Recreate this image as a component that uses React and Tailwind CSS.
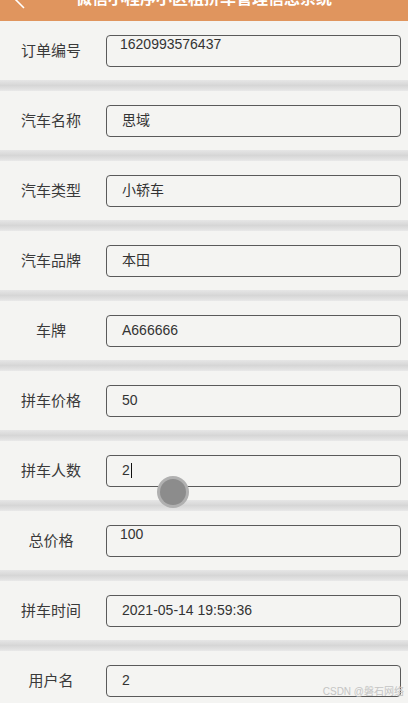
import React from "react";

const rows = [
  { label: "订单编号", value: "1620993576437", top: true },
  { label: "汽车名称", value: "思域" },
  { label: "汽车类型", value: "小轿车" },
  { label: "汽车品牌", value: "本田" },
  { label: "车牌", value: "A666666" },
  { label: "拼车价格", value: "50" },
  { label: "拼车人数", value: "2", caret: true },
  { label: "总价格", value: "100", top: true },
  { label: "拼车时间", value: "2021-05-14 19:59:36" },
  { label: "用户名", value: "2" },
];

const Row = ({ label, value, top, caret }) => (
  <div className="flex flex-row items-center h-[59px] bg-[#f4f4f2]">
    <div className="w-[90px] ml-[6px] mt-[2px] text-center text-[15px] text-[#3a3a3a]">{label}</div>
    <div
      className={
        top
          ? "flex flex-row items-start ml-[10px] w-[295px] h-[32px] border border-[#5a5a5a] rounded-[4px] pl-[13px] text-[14px] leading-[17px] text-[#333]"
          : "flex flex-row items-center ml-[10px] w-[295px] h-[32px] border border-[#5a5a5a] rounded-[4px] pl-[15px] text-[14px] leading-[17px] text-[#333]"
      }
    >
      <span>{value}</span>
      {caret && <span className="w-px h-[15px] bg-[#111] ml-[1px]"></span>}
    </div>
  </div>
);

export default function App() {
  return (
    <div
      className="relative w-[408px] h-[703px] overflow-hidden bg-[#f4f4f2]"
      style={{ fontFamily: '"Liberation Sans", "Noto Sans CJK SC", sans-serif' }}
    >
      <div className="relative flex flex-row items-center justify-center h-[44px] -mt-[23px] bg-[#e0955e]">
        <svg className="absolute left-[13px] top-[12px]" width="14" height="20" viewBox="0 0 14 20">
          <path d="M11 1 L2 10 L11 19" fill="none" stroke="#fff" strokeWidth="1.6" />
        </svg>
        <span className="text-white font-bold text-[16px]">微信小程序小区租拼车管理信息系统</span>
      </div>
      <div className="flex flex-col">
        {rows.map((r, i) => (
          <React.Fragment key={i}>
            {i > 0 && (
              <div className="h-[11px] bg-linear-to-b from-[#e6e6e6] via-[#d6d6d6] to-[#e8e8e8]"></div>
            )}
            <Row {...r} />
          </React.Fragment>
        ))}
      </div>
      <div className="absolute left-[157px] top-[476px] w-[32px] h-[32px] rounded-full bg-[#b0b0b0] flex items-center justify-center">
        <div className="w-[26px] h-[26px] rounded-full bg-[#8c8c8c]"></div>
      </div>
      <div className="absolute right-[4px] top-[684px] text-[10px] text-[#c4c4c4]">CSDN @磐石网络</div>
    </div>
  );
}
